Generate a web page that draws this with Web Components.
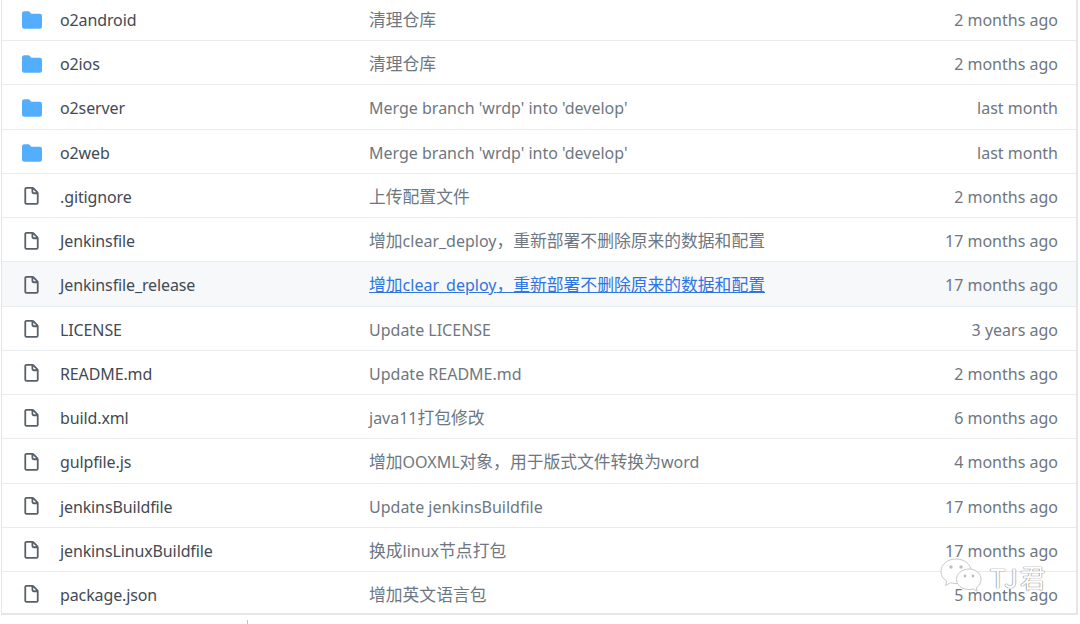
<!DOCTYPE html>
<html lang="zh">
<head>
<meta charset="utf-8">
<title>o2oa files</title>
<style>
  html, body { margin: 0; padding: 0; background: #fff; height: 624px; overflow: hidden; }
  body { font-family: "Noto Sans", "Noto Sans CJK SC", sans-serif; position: relative; }
  .tick { position: absolute; left: 247px; top: 620px; width: 1px; height: 4px; background: #c4c4c4; }
</style>
</head>
<body>
<file-list>
  <file-row type="dir" name="o2android" msg="清理仓库" age="2 months ago"></file-row>
  <file-row type="dir" name="o2ios" msg="清理仓库" age="2 months ago"></file-row>
  <file-row type="dir" name="o2server" msg="Merge branch 'wrdp' into 'develop'" age="last month"></file-row>
  <file-row type="dir" name="o2web" msg="Merge branch 'wrdp' into 'develop'" age="last month"></file-row>
  <file-row type="file" name=".gitignore" msg="上传配置文件" age="2 months ago"></file-row>
  <file-row type="file" name="Jenkinsfile" msg="增加clear_deploy，重新部署不删除原来的数据和配置" age="17 months ago"></file-row>
  <file-row type="file" name="Jenkinsfile_release" msg="增加clear_deploy，重新部署不删除原来的数据和配置" age="17 months ago" hover></file-row>
  <file-row type="file" name="LICENSE" msg="Update LICENSE" age="3 years ago"></file-row>
  <file-row type="file" name="README.md" msg="Update README.md" age="2 months ago"></file-row>
  <file-row type="file" name="build.xml" msg="java11打包修改" age="6 months ago"></file-row>
  <file-row type="file" name="gulpfile.js" msg="增加OOXML对象，用于版式文件转换为word" age="4 months ago"></file-row>
  <file-row type="file" name="jenkinsBuildfile" msg="Update jenkinsBuildfile" age="17 months ago"></file-row>
  <file-row type="file" name="jenkinsLinuxBuildfile" msg="换成linux节点打包" age="17 months ago"></file-row>
  <file-row type="file" name="package.json" msg="增加英文语言包" age="5 months ago" last></file-row>
</file-list>
<wechat-mark></wechat-mark>
<div class="tick"></div>

<script>
const listTemplate = document.createElement('template')
listTemplate.innerHTML = `
<style>
  :host {
    display: block;
    box-sizing: border-box;
    width: 1077px;
    margin: -3.2px 0 0 1px;
    border-left: 1px solid #e3e6ea;
    border-right: 2px solid #e3e6ea;
  }
</style>
<slot></slot>
`;

class FileList extends HTMLElement {
    constructor() {
        super();
        this.attachShadow({mode: 'open'});
        this.shadowRoot.appendChild(listTemplate.content.cloneNode(true));
    }
}

const rowTemplate = document.createElement('template')
rowTemplate.innerHTML = `
<style>
  :host {
    display: grid;
    grid-template-columns: 58px 309px 1fr auto;
    align-items: center;
    box-sizing: border-box;
    height: 44.25px;
    padding: 3px 18px 0 0;
    border-bottom: 1px solid #e9ecef;
    font-size: 16px;
    line-height: 22px;
    color: #57606a;
    white-space: nowrap;
  }
  :host([hover]) { background: #f6f8fa; }
  :host([last]) { height: 42.5px; padding-top: 5px; border-bottom: 2px solid #e3e6ea; }
  .icon { display: flex; align-items: center; height: 20px; padding-left: 19.7px; }
  .name { color: #424a53; letter-spacing: -.12px; }
  .msg, .age { color: #6e7781; }
  .cjk { font-size: 16.8px; line-height: 0; }
  :host([hover]) .msg { color: #2f74e0; text-decoration: underline; }
  svg { display: block; }
</style>
<span class="icon"></span>
<span class="name"></span>
<span class="msg"></span>
<span class="age"></span>
`;

const ICONS = {
    dir: '<svg width="20" height="20" viewBox="0 0 16 16" fill="#54aeff"><path d="M1.75 1A1.75 1.75 0 0 0 0 2.75v10.5C0 14.216.784 15 1.750 15h12.500A1.750 1.750 0 0 0 16 13.250v-8.500A1.750 1.750 0 0 0 14.250 3H7.500a.25.25 0 0 1-.2-.1l-.9-1.200C6.070 1.260 5.550 1 5 1H1.750z"/></svg>',
    file: '<svg width="19" height="19" viewBox="0 0 16 16" fill="#57606a"><path fill-rule="evenodd" d="M3.750 1.500a.25.25 0 0 0-.25.25v11.500c0 .138.112.25.25.25h8.500a.25.25 0 0 0 .25-.25V6H9.750A1.750 1.750 0 0 1 8 4.250V1.500H3.750zm5.750.56v2.190c0 .138.112.25.25.25h2.190L9.500 2.060zM2 1.750C2 .784 2.784 0 3.750 0h5.086c.464 0 .909.184 1.237.513l3.414 3.414c.329.328.513.773.513 1.237v8.086A1.750 1.750 0 0 1 12.250 15h-8.500A1.750 1.750 0 0 1 2 13.250V1.750z"/></svg>'
};

class FileRow extends HTMLElement {
    constructor() {
        super();
        this.attachShadow({mode: 'open'});
        this.shadowRoot.appendChild(rowTemplate.content.cloneNode(true));
        this.shadowRoot.querySelector('.icon').innerHTML = ICONS[this.getAttribute('type')];
        this.shadowRoot.querySelector('.name').textContent = this.getAttribute('name');
        this.shadowRoot.querySelector('.age').textContent = this.getAttribute('age');
        // chinese runs are a bit bigger than the latin ones in the reference
        const msg = this.shadowRoot.querySelector('.msg');
        this.getAttribute('msg').split(/([\u3000-\u9fff\uff00-\uffef]+)/).forEach((part, i) => {
            if (!part) return;
            if (i % 2) {
                const cjk = document.createElement('span');
                cjk.className = 'cjk';
                cjk.textContent = part;
                msg.appendChild(cjk);
            } else {
                msg.appendChild(document.createTextNode(part));
            }
        });
    }
}

const markTemplate = document.createElement('template')
markTemplate.innerHTML = `
<style>
  :host {
    position: absolute;
    left: 940px;
    top: 556px;
    display: flex;
    align-items: center;
    gap: 6px;
  }
  svg { display: block; }
  span {
    font: 26px "Noto Sans CJK SC", "Noto Sans", sans-serif;
    color: #fff;
    letter-spacing: 2px;
    text-shadow: 0 0 1px #666, 0 0 1px #666;
  }
</style>
<svg width="44" height="40" viewBox="0 0 44 40">
  <g fill="#fff" stroke="#c8c8c8" stroke-width="1">
    <path d="M16 3C7.500 3 1 8.600 1 15.500c0 4 2.200 7.400 5.700 9.700L5.500 29.500l5-2.800c1.700.5 3.500.8 5.500.8 8.500 0 15-5.600 15-12.500S24.500 3 16 3z"/>
    <path d="M29 13c-7 0-12.500 4.600-12.500 10.300S22 33.600 29 33.600c1.500 0 2.900-.2 4.200-.6l4 2.200-1-3.500c3-1.900 4.800-5 4.800-8.400C41 17.600 36 13 29 13z"/>
  </g>
  <g fill="#bdbdbd">
    <circle cx="11" cy="11" r="1.700"/><circle cx="21" cy="11" r="1.700"/>
    <circle cx="25" cy="20" r="1.400"/><circle cx="33" cy="20" r="1.400"/>
  </g>
</svg>
<span>TJ君</span>
`;

class WechatMark extends HTMLElement {
    constructor() {
        super();
        this.attachShadow({mode: 'open'});
        this.shadowRoot.appendChild(markTemplate.content.cloneNode(true));
    }
}

window.customElements.define('file-list', FileList);
window.customElements.define('file-row', FileRow);
window.customElements.define('wechat-mark', WechatMark);
</script>
</body>
</html>
